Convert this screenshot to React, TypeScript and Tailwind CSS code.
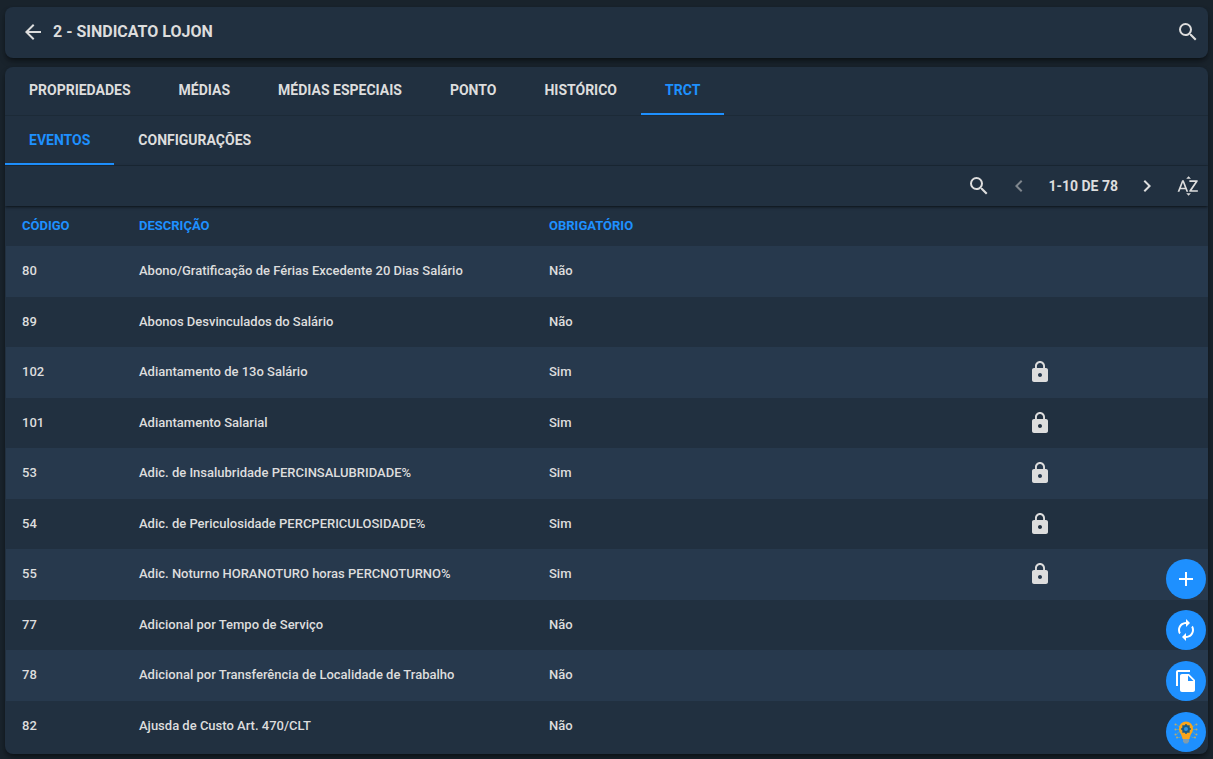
import {
  MdAdd,
  MdArrowBack,
  MdAutorenew,
  MdChevronLeft,
  MdChevronRight,
  MdFileCopy,
  MdLock,
  MdSearch,
  MdSortByAlpha,
} from "react-icons/md";

type Evento = {
  codigo: number;
  descricao: string;
  obrigatorio: boolean;
};

const tabs = ["Propriedades", "Médias", "Médias Especiais", "Ponto", "Histórico", "TRCT"];
const subTabs = ["Eventos", "Configurações"];

const eventos: Evento[] = [
  { codigo: 80, descricao: "Abono/Gratificação de Férias Excedente 20 Dias Salário", obrigatorio: false },
  { codigo: 89, descricao: "Abonos Desvinculados do Salário", obrigatorio: false },
  { codigo: 102, descricao: "Adiantamento de 13o Salário", obrigatorio: true },
  { codigo: 101, descricao: "Adiantamento Salarial", obrigatorio: true },
  { codigo: 53, descricao: "Adic. de Insalubridade PERCINSALUBRIDADE%", obrigatorio: true },
  { codigo: 54, descricao: "Adic. de Periculosidade PERCPERICULOSIDADE%", obrigatorio: true },
  { codigo: 55, descricao: "Adic. Noturno HORANOTURO horas PERCNOTURNO%", obrigatorio: true },
  { codigo: 77, descricao: "Adicional por Tempo de Serviço", obrigatorio: false },
  { codigo: 78, descricao: "Adicional por Transferência de Localidade de Trabalho", obrigatorio: false },
  { codigo: 82, descricao: "Ajusda de Custo Art. 470/CLT", obrigatorio: false },
];

function TabBar({ items, active, label }: { items: string[]; active: string; label: string }) {
  return (
    <div role="tablist" aria-label={label} className="flex border-b border-[#1c2a37]">
      {items.map((item) => (
        <button
          key={item}
          role="tab"
          aria-selected={item === active}
          className={
            item === active
              ? "h-12 border-b-2 border-[#1e90ff] px-6 text-sm font-bold uppercase text-[#1e90ff]"
              : "h-12 border-b-2 border-transparent px-6 text-sm font-bold uppercase"
          }
        >
          {item}
        </button>
      ))}
    </div>
  );
}

function BulbIcon() {
  return (
    <svg width="24" height="24" viewBox="0 0 24 24" fill="none" aria-hidden="true">
      <g stroke="#5da3b4" strokeWidth="1">
        <path d="M6 6.5H4.5L3 4.5H1.5M6 9.5H1.5M6 12H4.5L3 14.5H1.5M8 15.5L6 17.5H3" />
        <path d="M18 6.5h1.5L21 4.5h1.5M18 9.5h4.5M18 12h1.5L21 14.5h1.5M16 15.5l2 2h3" />
      </g>
      <g fill="#b9aa72">
        <circle cx="1.5" cy="4.5" r="1" />
        <circle cx="1.5" cy="9.5" r="1" />
        <circle cx="1.5" cy="14.5" r="1" />
        <circle cx="3" cy="17.5" r="1" />
        <circle cx="22.5" cy="4.5" r="1" />
        <circle cx="22.5" cy="9.5" r="1" />
        <circle cx="22.5" cy="14.5" r="1" />
        <circle cx="21" cy="17.5" r="1" />
      </g>
      <path
        d="M12 1.5a7 7 0 0 0-7 7c0 4 2.8 5.5 3.5 10.5h7c.7-5 3.500-6.500 3.500-10.500a7 7 0 0 0-7-7z"
        fill="#f9a51a"
      />
      <circle cx="12" cy="9" r="3" stroke="#1b5c86" strokeWidth="2" fill="#2f95e8" />
      <path
        d="M12 4v2M12 12v2M7 9h2M15 9h2M8.5 5.5l1.3 1.3M14.2 11.2l1.3 1.3M15.5 5.5l-1.3 1.3M9.8 11.2l-1.3 1.3"
        stroke="#1b5c86"
        strokeWidth="1.5"
      />
      <path d="M9 19h6v2.5l-1.5 2h-3L9 21.5z" fill="#7f9cae" />
    </svg>
  );
}

const fabClass = "grid size-10 place-items-center rounded-full bg-[#1e90ff] text-white";

export default function App() {
  return (
    <div className="min-h-screen bg-[#19232c] px-[5px] pb-[5px] pt-[7px] font-[Roboto,sans-serif] text-[#dddddd]">
      <header className="flex h-[51px] items-center gap-2 rounded-lg bg-[#213040] pb-0.5 pl-4 pr-2 shadow-md shadow-black/40">
        <button aria-label="Voltar">
          <MdArrowBack size={24} />
        </button>
        <h1 className="flex-1 text-base font-bold uppercase">2 - Sindicato Lojon</h1>
        <button aria-label="Pesquisar">
          <MdSearch size={24} />
        </button>
      </header>

      <main className="mt-[9px] overflow-hidden rounded-lg bg-[#213040] pb-[3px] shadow-md shadow-black/40">
        <TabBar items={tabs} active="TRCT" label="Sindicato" />
        <div className="pt-px">
          <TabBar items={subTabs} active="Eventos" label="TRCT" />
        </div>

        <div className="relative flex h-10 items-center justify-end pr-2 shadow-sm shadow-black/50">
          <button aria-label="Pesquisar eventos">
            <MdSearch size={24} />
          </button>
          <button aria-label="Página anterior" disabled className="ml-4 text-[#7f868d]">
            <MdChevronLeft size={24} />
          </button>
          <span className="mx-[17px] text-sm font-bold uppercase">1-10 de 78</span>
          <button aria-label="Próxima página">
            <MdChevronRight size={24} />
          </button>
          <button aria-label="Ordenar" className="ml-[17px]">
            <MdSortByAlpha size={24} />
          </button>
        </div>

        <table className="ml-px w-[calc(100%-1px)] table-fixed text-left text-[13px]">
          <colgroup>
            <col className="w-[117px]" />
            <col className="w-[410px]" />
            <col />
            <col className="w-[196px]" />
          </colgroup>
          <thead>
            <tr className="h-10 uppercase text-[#1e90ff]">
              <th className="px-4 font-bold">Código</th>
              <th className="px-4 font-bold">Descrição</th>
              <th className="px-4 font-bold">Obrigatório</th>
              <td />
            </tr>
          </thead>
          <tbody className="font-medium">
            {eventos.map((evento) => (
              <tr
                key={evento.codigo}
                className="h-[50px] odd:h-[51px] odd:bg-[#27394d] odd:[&>td]:pb-px"
              >
                <td className="px-4">{evento.codigo}</td>
                <td className="px-4">{evento.descricao}</td>
                <td className="px-4">{evento.obrigatorio ? "Sim" : "Não"}</td>
                <td className="px-4">
                  {evento.obrigatorio && <MdLock size={24} aria-label="Bloqueado" />}
                </td>
              </tr>
            ))}
          </tbody>
        </table>
      </main>

      <div className="fixed bottom-[7px] right-[7px] flex flex-col gap-[11px]">
        <button aria-label="Adicionar" className={fabClass}>
          <MdAdd size={24} />
        </button>
        <button aria-label="Atualizar" className={fabClass}>
          <MdAutorenew size={24} />
        </button>
        <button aria-label="Copiar" className={fabClass}>
          <MdFileCopy size={24} />
        </button>
        <button aria-label="Sugestões" className={fabClass}>
          <BulbIcon />
        </button>
      </div>
    </div>
  );
}
